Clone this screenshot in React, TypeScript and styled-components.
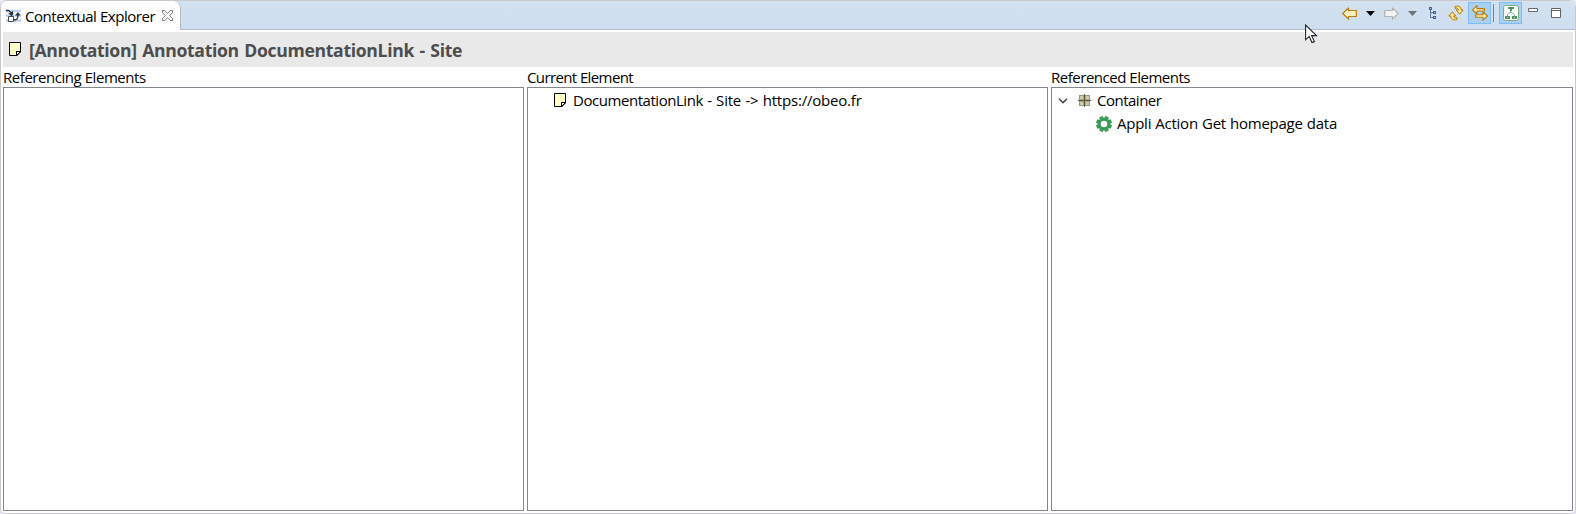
import React from 'react';
import styled, { createGlobalStyle } from 'styled-components';

const Global = createGlobalStyle`
  * { box-sizing: border-box; }
  html, body { margin: 0; background: #e6ebf5; overflow: hidden; }
  svg { display: block; flex: none; }
`;

const View = styled.main`
  position: relative;
  width: 1576px;
  height: 514px;
  display: flex;
  flex-direction: column;
  border: 1px solid #c9c9cb;
  border-radius: 7px 7px 4px 4px;
  background: #fff;
  overflow: hidden;
  font: 15px/20px "Open Sans", "Noto Sans", sans-serif;
  color: #000;
`;

const TabBar = styled.header`
  flex: none;
  height: 29px;
  display: flex;
  justify-content: space-between;
  background: linear-gradient(#d3e1f0, #cddeee);
  box-shadow: inset 0 -1px #b4b9d0;
`;

const Tab = styled.div`
  width: 180px;
  height: 29px;
  padding: 0 0 0 5px;
  display: flex;
  align-items: center;
  background: #fff;
  border-right: 1px solid #b4b9d0;
  border-radius: 0 7px 0 0;
`;

const Label = styled.span<{ $spacing: number; $word?: number }>`
  letter-spacing: ${(p) => p.$spacing}px;
  word-spacing: ${(p) => p.$word ?? 0}px;
  white-space: pre;
`;

const TabLabel = styled(Label)`
  width: 131px;
  margin: 1px 6px 0 4px;
`;

const Toolbar = styled.div`
  display: flex;
  height: 24px;
  padding: 1px 8px 0 0;
`;

const Tool = styled.div<{ $width: number; $active?: boolean }>`
  width: ${(p) => p.$width}px;
  height: 22px;
  display: flex;
  align-items: center;
  justify-content: center;
  background: ${(p) => (p.$active ? '#a9d0f0' : 'transparent')};
  box-shadow: ${(p) => (p.$active ? 'inset 0 0 0 1px #7cbdf5' : 'none')};
`;

const Separator = styled.div`
  width: 1px;
  height: 18px;
  margin: 2px 5px 0 2px;
  background: #7e8287;
`;

const Banner = styled.section`
  flex: none;
  height: 35px;
  margin: 2px 2px 0;
  padding-left: 6px;
  display: flex;
  align-items: center;
  gap: 8px;
  background: #e9e9e9;
`;

const Title = styled.h1`
  margin: 0;
  font-size: 17.6px;
  line-height: 24px;
  font-weight: 700;
  color: #4d4d4d;
  letter-spacing: -0.32px;
  word-spacing: 1.2px;
  white-space: pre;
`;

const Columns = styled.div`
  flex: 1;
  min-height: 0;
  display: grid;
  grid-template-columns: 521px 521px 522px;
  gap: 3px;
  padding: 0 2px 2px;
`;

const Column = styled.section`
  display: flex;
  flex-direction: column;
  min-width: 0;
`;

const Heading = styled.div`
  height: 20px;
`;

const Panel = styled.div`
  flex: 1;
  border: 1px solid #828790;
  padding-top: 1px;
`;

const Row = styled.div<{ $indent: number }>`
  height: 23px;
  padding-left: ${(p) => p.$indent}px;
  display: flex;
  align-items: center;
`;

const RowLabel = styled(Label)`
  padding-bottom: 2px;
`;

const RowIcon = styled.span<{ $gap: number }>`
  margin-right: ${(p) => p.$gap}px;
`;

const Pointer = styled.div`
  position: absolute;
  left: 1304px;
  top: 23px;
`;

const Note = () => (
  <svg width="12" height="15" viewBox="0 0 12 15">
    <path d="M.5.5h11v9l-4 4h-7z" fill="#ffffca" stroke="#000" />
    <path d="M7 9h5v1l-4 4H7z" fill="#000" />
    <path d="M8 10h1v2H8zM9 10h1v1H9z" fill="#ffffca" />
  </svg>
);

const ExplorerIcon = () => (
  <svg width="15" height="14" viewBox="0 0 15 14">
    <path d="M0 2h15M0 6.5h15M0 11.5h15" stroke="#bcd3f3" strokeWidth="2.4" />
    <path d="M0 1.5h2.5L5.5 4v2M8 11c3 0 4-1 4-6" fill="none" stroke="#2d333b" strokeWidth="1.4" />
    <path d="M2 5h5V2zM3 5l3 2.5L7.5 4zM9 6.5h5.5L12 3z" fill="#2d333b" />
    <path d="M2.5 7.5h5v5h-5z" fill="#fff" stroke="#43484f" />
  </svg>
);

const CloseIcon = () => (
  <svg width="11" height="11" viewBox="0 0 11 11">
    <path d="M.5.5h2.2l2.8 2.8L8.3.5h2.2v2.2L7.7 5.5l2.8 2.8v2.2H8.3L5.5 7.7l-2.8 2.8H.5V8.3l2.8-2.8L.5 2.7z" fill="#fff" stroke="#6a6a6a" strokeWidth=".9" />
  </svg>
);

const Arrow = ({ forward }: { forward?: boolean }) => (
  <svg width="15" height="13" viewBox="0 0 15 13">
    <path
      d="M.8 6.5L6.5.8v2.7h7.8v6H6.5v2.7z"
      fill={forward ? '#f3f3f3' : '#fff3bd'}
      stroke={forward ? '#b3b3b3' : '#bd7b0b'}
      strokeWidth="1.2"
      strokeLinejoin="round"
      transform={forward ? 'translate(15 0) scale(-1 1)' : undefined}
    />
  </svg>
);

const Triangle = ({ color }: { color: string }) => (
  <svg width="9" height="5" viewBox="0 0 9 5">
    <path d="M0 0h9L4.5 5z" fill={color} />
  </svg>
);

const TreeIcon = () => (
  <svg width="8" height="12" viewBox="0 0 8 12">
    <path d="M1.5 2v8.5H5M1.5 5.5H5" fill="none" stroke="#63758f" />
    <path d="M0 0h3v3H0zM4 4h3v3H4zM4 9h3v3H4z" fill="#4864a5" />
    <path d="M1 1h1v1H1zM5 5h1v1H5zM5 10h1v1H5z" fill="#91b9e9" />
  </svg>
);

const RefreshIcon = () => (
  <svg width="16" height="16" viewBox="0 0 16 16">
    <g fill="#ffe58c" stroke="#b87809" strokeLinejoin="round">
      <path d="M7 1.5C11 .3 13.3 2 13.3 5h1.8l-3.4 4.2L8.2 5h2.2c0-1.6-1.2-2.3-3.4-1.6z" />
      <path d="M9 14.5C5 15.7 2.7 14 2.7 11H.9l3.4-4.2L7.8 11H5.6c0 1.6 1.2 2.3 3.4 1.6z" />
    </g>
  </svg>
);

const LinkIcon = () => (
  <svg width="16" height="16" viewBox="0 0 16 16">
    <g fill="#fff0ad" stroke="#b87809" strokeWidth="1.1" strokeLinejoin="round">
      <path d="M.6 4.8L5 .6v3h7.4v2.4H5v3z" />
      <path d="M15.4 11L11 6.8v3H3.6v2.4H11v3z" />
    </g>
  </svg>
);

const HierarchyIcon = () => (
  <svg width="16" height="16" viewBox="0 0 16 16">
    <rect x=".5" y=".5" width="15" height="15" rx="2" fill="#fff" stroke="#7cac8a" />
    <path d="M7.5 5v3M4.5 11V9.5L7 7.5h2l2.5 2V11" fill="none" stroke="#7fb08b" />
    <path d="M5 2h6v2H9v2H7V4H5zM2 11h5v3H2zM9 11h5v3H9z" fill="#4c965f" />
    <path d="M4 12h1v1H4zM11 12h1v1h-1z" fill="#b8d7bf" />
  </svg>
);

const MinimizeIcon = () => (
  <svg width="10" height="14" viewBox="0 0 10 14">
    <path d="M.5 2.5h9v3h-9z" fill="#fff" stroke="#66696d" />
  </svg>
);

const MaximizeIcon = () => (
  <svg width="10" height="10" viewBox="0 0 10 10">
    <path d="M.5.5h9v9h-9zM0 2.5h10" fill="#fff" stroke="#5f6267" />
  </svg>
);

const Chevron = () => (
  <svg width="10" height="6" viewBox="0 0 10 6">
    <path d="M1 .8l4 4 4-4" fill="none" stroke="#404040" strokeWidth="1.5" />
  </svg>
);

const PackageIcon = () => (
  <svg width="13" height="13" viewBox="0 0 13 13">
    <path d="M1 1h11v11H1z" fill="#aaa684" />
    <path d="M2 2h3v3H2zM8 2h3v3H8zM2 8h3v3H2zM8 8h3v3H8z" fill="#ceccb0" />
    <path d="M1.5 1.5h10v10h-10z" fill="none" stroke="#9b9778" />
    <path d="M6.5 0v13M0 6.5h13" stroke="#5d573b" />
  </svg>
);

const GearIcon = () => (
  <svg width="16" height="16" viewBox="0 0 16 16">
    <g fill="#3a9b57">
      {[0, 45, 90, 135].map((a) => (
        <rect key={a} x="6.2" y="0" width="3.6" height="16" transform={`rotate(${a + 22.5} 8 8)`} />
      ))}
      <circle cx="8" cy="8" r="6.5" />
    </g>
    <circle cx="8" cy="8" r="3.3" fill="#fff" />
  </svg>
);

const PointerIcon = () => (
  <svg width="13" height="20" viewBox="0 0 13 20">
    <path d="M.6 1v14.8l3.6-3.4 2.8 6.2 2.4-1-2.8-6h4.9z" fill="#fff" stroke="#20232d" strokeWidth="1.1" />
  </svg>
);

export default function App() {
  return (
    <View>
      <Global />
      <TabBar>
        <Tab>
          <ExplorerIcon />
          <TabLabel $spacing={-0.45}>Contextual Explorer</TabLabel>
          <CloseIcon />
        </Tab>
        <Toolbar>
          <Tool $width={23}><Arrow /></Tool>
          <Tool $width={19}><Triangle color="#000" /></Tool>
          <Tool $width={23}><Arrow forward /></Tool>
          <Tool $width={19}><Triangle color="#70757b" /></Tool>
          <Tool $width={22}><TreeIcon /></Tool>
          <Tool $width={24}><RefreshIcon /></Tool>
          <Tool $width={23} $active><LinkIcon /></Tool>
          <Separator />
          <Tool $width={23} $active><HierarchyIcon /></Tool>
          <Tool $width={22}><MinimizeIcon /></Tool>
          <Tool $width={23}><MaximizeIcon /></Tool>
        </Toolbar>
      </TabBar>
      <Banner>
        <Note />
        <Title>[Annotation] Annotation DocumentationLink - Site</Title>
      </Banner>
      <Columns>
        <Column>
          <Heading><Label $spacing={-0.45}>Referencing Elements</Label></Heading>
          <Panel />
        </Column>
        <Column>
          <Heading><Label $spacing={-0.61}>Current Element</Label></Heading>
          <Panel>
            <Row $indent={26}>
              <RowIcon $gap={7}><Note /></RowIcon>
              <RowLabel $spacing={-0.45} $word={0.5}>DocumentationLink</RowLabel>
              <RowLabel $spacing={-0.2} $word={0.6}>{' - Site -> https://obeo.fr'}</RowLabel>
            </Row>
          </Panel>
        </Column>
        <Column>
          <Heading><Label $spacing={-0.48}>Referenced Elements</Label></Heading>
          <Panel>
            <Row $indent={6}>
              <RowIcon $gap={10}><Chevron /></RowIcon>
              <RowIcon $gap={6}><PackageIcon /></RowIcon>
              <RowLabel $spacing={-0.5}>Container</RowLabel>
            </Row>
            <Row $indent={44}>
              <RowIcon $gap={5}><GearIcon /></RowIcon>
              <RowLabel $spacing={-0.25} $word={0.5}>Appli Action Get homepage data</RowLabel>
            </Row>
          </Panel>
        </Column>
      </Columns>
      <Pointer><PointerIcon /></Pointer>
    </View>
  );
}
